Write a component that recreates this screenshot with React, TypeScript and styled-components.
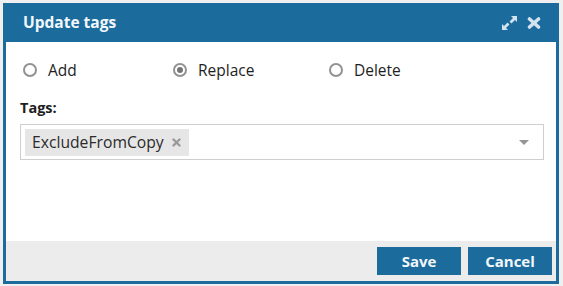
import React from "react";
import styled, { createGlobalStyle } from "styled-components";

const Global = createGlobalStyle`
  html, body { margin: 0; padding: 0; }
  body {
    background: #efefef;
    font-family: "Open Sans", "Liberation Sans", sans-serif;
    width: 563px;
    height: 286px;
    overflow: hidden;
  }
`;

const BLUE = "#1b6b9d";

const Page = styled.div`
  padding: 3px 4px 0 3px;
`;

const Dialog = styled.div`
  width: 556px;
  height: 281px;
  box-sizing: border-box;
  border: 3px solid ${BLUE};
  border-top: 0;
  background: #fff;
  display: flex;
  flex-direction: column;
`;

const Header = styled.div`
  height: 39px;
  background: ${BLUE};
  display: flex;
  align-items: center;
  margin: 0 -3px;
  padding-left: 20px;
  padding-right: 18px;
`;

const Title = styled.div`
  flex: 1;
  color: #f2f7fb;
  font-size: 15.5px;
  font-weight: 700;
  margin-top: -1px;
`;

const Icons = styled.div`
  display: flex;
  align-items: center;
  gap: 9px;
`;

const IconButton = styled.span`
  display: inline-flex;
  color: #d3e3ee;
`;

const Body = styled.div`
  flex: 1;
  padding: 17px 12px 0 14px;
`;

const RadioRow = styled.div`
  display: grid;
  grid-template-columns: 150px 156px auto;
  align-items: center;
  padding-left: 3px;
  height: 20px;
`;

const RadioItem = styled.label`
  display: flex;
  align-items: center;
  gap: 11px;
  font-size: 15.5px;
  color: #1e1e1e;
`;

const RadioCircle = styled.span<{ $checked?: boolean }>`
  flex: 0 0 auto;
  width: 14px;
  height: 14px;
  box-sizing: border-box;
  border-radius: 50%;
  border: 2px solid #929292;
  display: inline-flex;
  align-items: center;
  justify-content: center;
  &::after {
    content: "";
    width: 6px;
    height: 6px;
    border-radius: 50%;
    background: ${(p) => (p.$checked ? "#747474" : "transparent")};
  }
`;

const FieldLabel = styled.div`
  margin-top: 20px;
  font-size: 14.5px;
  font-weight: 700;
  color: #1e1e1e;
  line-height: 18px;
`;

const TagBox = styled.div`
  margin-top: 7px;
  height: 36px;
  box-sizing: border-box;
  border: 1px solid #cfcfcf;
  display: flex;
  align-items: center;
  padding: 0 14px 0 4px;
`;

const Chip = styled.span`
  display: inline-flex;
  align-items: center;
  height: 27px;
  background: #e6e6e6;
  padding: 0 8px 0 7px;
  gap: 8px;
  font-size: 15.7px;
  color: #2a2a2a;
`;

const ChipClose = styled.span`
  display: inline-flex;
  color: #9a9a9a;
  margin-top: 1px;
`;

const Spacer = styled.div`
  flex: 1;
`;

const Caret = styled.span`
  width: 0;
  height: 0;
  border-left: 5px solid transparent;
  border-right: 5px solid transparent;
  border-top: 5px solid #959595;
`;

const Footer = styled.div`
  height: 40px;
  background: #ececec;
  display: flex;
  justify-content: flex-end;
  align-items: center;
  gap: 7px;
  padding-right: 4px;
`;

const Button = styled.button`
  width: 84px;
  height: 28px;
  border: 0;
  background: ${BLUE};
  color: #f2f7fb;
  font-family: "Open Sans", "Liberation Sans", sans-serif;
  font-size: 15px;
  font-weight: 700;
  padding: 0;
  cursor: pointer;
`;

const ExpandIcon = () => (
  <svg width="17" height="16" viewBox="0 0 17 16" fill="currentColor">
    <polygon points="10,1 16,1 16,7" />
    <polygon points="1,9 1,15 7,15" />
    <line x1="13.5" y1="3.5" x2="9.5" y2="7.5" stroke="currentColor" strokeWidth="2.6" />
    <line x1="3.5" y1="12.5" x2="7.5" y2="8.5" stroke="currentColor" strokeWidth="2.6" />
  </svg>
);

const CloseIcon = () => (
  <svg width="14" height="12" viewBox="0 0 14 12" stroke="currentColor" strokeWidth="3.6" strokeLinecap="round">
    <line x1="2.5" y1="2" x2="11.5" y2="10" />
    <line x1="11.5" y1="2" x2="2.5" y2="10" />
  </svg>
);

const SmallX = () => (
  <svg width="9" height="9" viewBox="0 0 9 9" stroke="currentColor" strokeWidth="2.4" strokeLinecap="round">
    <line x1="1.5" y1="1.5" x2="7.5" y2="7.5" />
    <line x1="7.5" y1="1.5" x2="1.5" y2="7.5" />
  </svg>
);

export default function App() {
  return (
    <>
      <Global />
      <Page>
        <Dialog>
          <Header>
            <Title>Update tags</Title>
            <Icons>
              <IconButton>
                <ExpandIcon />
              </IconButton>
              <IconButton>
                <CloseIcon />
              </IconButton>
            </Icons>
          </Header>
          <Body>
            <RadioRow>
              <RadioItem>
                <RadioCircle />
                Add
              </RadioItem>
              <RadioItem>
                <RadioCircle $checked />
                Replace
              </RadioItem>
              <RadioItem>
                <RadioCircle />
                Delete
              </RadioItem>
            </RadioRow>
            <FieldLabel>Tags:</FieldLabel>
            <TagBox>
              <Chip>
                ExcludeFromCopy
                <ChipClose>
                  <SmallX />
                </ChipClose>
              </Chip>
              <Spacer />
              <Caret />
            </TagBox>
          </Body>
          <Footer>
            <Button>Save</Button>
            <Button>Cancel</Button>
          </Footer>
        </Dialog>
      </Page>
    </>
  );
}
